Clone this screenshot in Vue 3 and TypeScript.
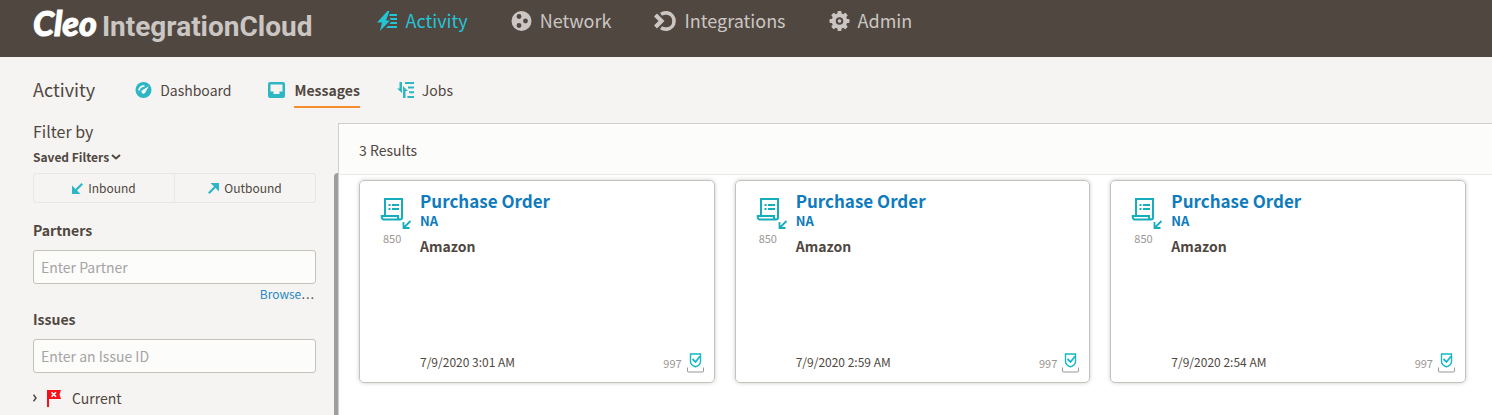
<script setup lang="ts">
import { ref } from 'vue'

interface Message {
  id: number
  type: string
  code: string
  reference: string
  partner: string
  received: string
  ack: string
}

const messages: Message[] = ['3:01', '2:59', '2:54'].map((time, index) => ({
  id: index,
  type: 'Purchase Order',
  code: '850',
  reference: 'NA',
  partner: 'Amazon',
  received: `7/9/2020 ${time} AM`,
  ack: '997',
}))

const partner = ref('')
const issueId = ref('')
</script>

<template>
  <div class="app">
    <header class="topbar">
      <a class="brand" href="#"><span class="brand-name">Cleo</span><span class="brand-product">IntegrationCloud</span></a>
      <nav class="main-nav" aria-label="Main">
        <a class="active" href="#activity">
          <svg width="21" height="20" viewBox="0 0 21 20" fill="currentColor" aria-hidden="true">
            <path d="M10.500 0 0 11.500h5L3 20l10-10.500H9L12.500 0z" />
            <path d="M12.800 3H20v2h-8zM12.500 7H20v2h-6zM14 11h6v2h-7.500zM11 15h9v2H9z" />
          </svg>
          <span>Activity</span>
        </a>
        <a href="#network">
          <svg width="21" height="20" viewBox="0 0 21 20" aria-hidden="true">
            <circle cx="10.500" cy="10" r="10" fill="currentColor" />
            <g fill="#504741"><circle cx="8" cy="5.500" r="2.400" /><circle cx="14.500" cy="10" r="2.400" /><circle cx="8" cy="14.500" r="2.400" /></g>
          </svg>
          <span>Network</span>
        </a>
        <a href="#integrations">
          <svg width="22" height="20" viewBox="0 0 22 20" fill="none" stroke="currentColor" aria-hidden="true">
            <path d="M1.500 4 7.500 10l-6 6" stroke-width="4.200" />
            <path d="M7 3.200C9 1.900 11 1.700 13 1.900c4.200.5 7 3.900 7 8.100s-2.800 7.600-7 8.100c-2 .2-4 0-6-1.300" stroke-width="3.600" />
          </svg>
          <span>Integrations</span>
        </a>
        <a href="#admin">
          <svg width="21" height="20" viewBox="0 0 21 20" aria-hidden="true">
            <g fill="currentColor">
              <circle cx="10.500" cy="10" r="7.800" />
              <rect v-for="turn in 8" :key="turn" x="8.500" y="0" width="4" height="5" rx="1" :transform="`rotate(${turn * 45} 10.500 10)`" />
            </g>
            <circle cx="10.500" cy="10" r="2.800" fill="none" stroke="#504741" stroke-width="2" />
          </svg>
          <span>Admin</span>
        </a>
      </nav>
    </header>

    <div class="subbar">
      <h1>Activity</h1>
      <nav class="sub-nav" aria-label="Activity">
        <a href="#dashboard">
          <svg width="17" height="16" viewBox="0 0 17 16" aria-hidden="true">
            <circle cx="8.500" cy="8" r="8" fill="#2db6c4" />
            <path d="M4 8.500a4.500 4.500 0 0 1 5.500-4.300" fill="none" stroke="#fff" stroke-width="1.600" />
            <path d="M13.800 4.200 8 7.800a2 2 0 1 0 2.300 2.500z" fill="#fff" />
          </svg>
          <span>Dashboard</span>
        </a>
        <a class="current" href="#messages">
          <svg width="18" height="16" viewBox="0 0 18 16" aria-hidden="true">
            <rect width="17" height="16" rx="2" fill="#2db6c4" />
            <path d="M2.500 2.500h12v7h-3V12h-6V9.500h-3z" fill="#f5f4f2" />
          </svg>
          <span>Messages</span>
        </a>
        <a href="#jobs">
          <svg width="17" height="16" viewBox="0 0 17 16" fill="#2db6c4" aria-hidden="true">
            <path d="M5 0v11L0 6.500h2.500V0zM6 16V4l5 5H8.500v7zM8 0h9v2H8zM11 4.500h6v2h-6zM12 9.300h5v2h-5zM10.500 14H17v2h-6.500z" />
          </svg>
          <span>Jobs</span>
        </a>
      </nav>
    </div>

    <div class="content">
      <aside class="sidebar">
        <h2>Filter by</h2>
        <button class="saved" type="button">
          <span>Saved Filters</span>
          <svg width="10" height="6" viewBox="0 0 10 6" aria-hidden="true"><path d="m1 1 4 3.500L9 1" fill="none" stroke="currentColor" stroke-width="2" /></svg>
        </button>
        <div class="directions">
          <button type="button">
            <svg width="11" height="11" viewBox="0 0 11 11" aria-hidden="true"><path d="m10.200.8-6.700 6.700" stroke="#2db6c4" stroke-width="2.200" /><path d="M0 2.500V11h8.500z" fill="#2db6c4" /></svg>
            <span>Inbound</span>
          </button>
          <button type="button">
            <svg width="11" height="11" viewBox="0 0 11 11" aria-hidden="true"><path d="M.8 10.200 7.500 3.500" stroke="#2db6c4" stroke-width="2.200" /><path d="M2.500 0H11v8.500z" fill="#2db6c4" /></svg>
            <span>Outbound</span>
          </button>
        </div>
        <label for="partner">Partners</label>
        <input id="partner" v-model="partner" type="text" placeholder="Enter Partner" />
        <a class="browse" href="#browse">Browse<span>…</span></a>
        <label for="issue">Issues</label>
        <input id="issue" v-model="issueId" type="text" placeholder="Enter an Issue ID" />
        <button class="tree-item" type="button">
          <svg width="4" height="8" viewBox="0 0 4 8" aria-hidden="true"><path d="M.5.700 3 4 .5 7.300" fill="none" stroke="currentColor" stroke-width="1.500" /></svg>
          <svg width="15" height="17" viewBox="0 0 15 17" aria-hidden="true">
            <path d="M0 0h14l-1.500 4.500L14 9H2v8H0z" fill="#f5101a" />
            <path d="m4.500 2.300 4.500 4.500m0-4.500L4.500 6.800" stroke="#fff" stroke-width="1.600" />
          </svg>
          <span>Current</span>
        </button>
      </aside>
      <div class="scroll-track"></div>

      <main class="results">
        <div class="results-head">{{ messages.length }} Results</div>
        <div class="cards">
          <article v-for="message in messages" :key="message.id" class="card">
            <div class="doc">
              <svg width="32" height="32" viewBox="0 0 32 32" fill="none" stroke="#16adbd" aria-hidden="true">
                <path d="M5 18V2h17v18.500a2 2 0 0 1-2 2H4.500a2.500 2.500 0 0 1-2.800-2.500V19H18v1.500a2 2 0 0 0 2 2" stroke-width="2" />
                <path d="M8.500 8h2m1.500 0h7M8.500 12h2m1.500 0h7" stroke-width="2" />
                <path d="m30.500 24-6.500 6.500M23.500 25v6h6" stroke-width="1.800" />
              </svg>
              <span class="code">{{ message.code }}</span>
            </div>
            <div class="details">
              <h3><a href="#message">{{ message.type }}</a></h3>
              <a class="reference" href="#message">{{ message.reference }}</a>
              <strong>{{ message.partner }}</strong>
              <footer>
                <time>{{ message.received }}</time>
                <span class="ack">
                  {{ message.ack }}
                  <svg width="18" height="20" viewBox="0 0 18 20" fill="none" aria-hidden="true">
                    <path d="M3.500 1h10v7.500c0 3-2.500 4.500-5 5.300-2.500-.8-5-2.300-5-5.300z" stroke="#18b8c6" stroke-width="1.400" />
                    <path d="m5.500 6 3 3L13 3.300" stroke="#18b8c6" stroke-width="1.800" />
                    <path d="M.5 14.500v3.500q0 1 1 1h14q1 0 1-1v-3.500" stroke="#9b9793" />
                  </svg>
                </span>
              </footer>
            </div>
          </article>
        </div>
      </main>
    </div>
  </div>
</template>

<style>
body {
  background: #f5f4f2;
}
</style>

<style scoped>
* {
  box-sizing: border-box;
}
.app {
  display: flex;
  flex-direction: column;
  min-height: 100vh;
  color: #504741;
  background: #f5f4f2;
  font: 14px/20px "Noto Sans CJK SC", "Noto Sans", sans-serif;
}
a {
  color: inherit;
  text-decoration: none;
}
button,
input {
  font: inherit;
  color: inherit;
}
h1,
h2,
h3 {
  margin: 0;
  font-weight: 400;
}
svg {
  flex: none;
}
.topbar {
  display: flex;
  align-items: flex-start;
  gap: 64px;
  height: 57px;
  padding: 0 33px;
  background: #504741;
  color: #cbc6c2;
}
.brand {
  display: flex;
  align-items: baseline;
  gap: 5px;
  padding-top: 3px;
  font: 700 28px/40px Roboto, sans-serif;
}
.brand-name {
  color: #fff;
  font-family: Lato, sans-serif;
  font-size: 34px;
  font-style: italic;
  font-weight: 900;
  -webkit-text-stroke: 1px currentColor;
}
.main-nav {
  display: flex;
  gap: 43px;
  padding-top: 8px;
  font-size: 18px;
  line-height: 24px;
}
.main-nav a {
  display: flex;
  align-items: center;
  gap: 8px;
}
.main-nav svg {
  margin-top: 2px;
}
.main-nav .active {
  color: #23c4d6;
}
.subbar {
  display: flex;
  align-items: center;
  gap: 40px;
  height: 66px;
  padding: 0 33px;
}
h1 {
  padding-bottom: 2px;
  font-size: 18px;
  line-height: 24px;
}
.sub-nav {
  display: flex;
  gap: 37px;
}
.sub-nav a {
  display: flex;
  align-items: center;
  gap: 8px;
}
.sub-nav span {
  padding: 6px 0;
  border-bottom: 2px solid transparent;
  border-top: 2px solid transparent;
}
.sub-nav .current span {
  font-weight: 700;
  border-bottom-color: #f68d2e;
}
.content {
  display: flex;
  flex: 1;
}
.sidebar {
  display: flex;
  flex-direction: column;
  align-items: stretch;
  width: 334px;
  padding: 0 18px 0 33px;
}
h2 {
  font-size: 16px;
  line-height: 16px;
}
.saved {
  display: flex;
  align-items: center;
  gap: 2px;
  margin: 10px 0 8px;
  padding: 0;
  border: 0;
  background: none;
  font-size: 12px;
  font-weight: 700;
  line-height: 16px;
}
.directions {
  display: flex;
  border: 1px solid #e8e6e0;
  border-radius: 3px;
  font-size: 12px;
}
.directions button {
  display: flex;
  flex: 1;
  align-items: center;
  justify-content: center;
  gap: 5px;
  height: 28px;
  padding: 0;
  border: 0;
  background: none;
}
.directions button + button {
  border-left: 1px solid #e8e6e0;
}
label {
  margin: 17px 0 10px;
  font-weight: 700;
}
input {
  width: 100%;
  height: 34px;
  padding: 0 7px;
  border: 1px solid #c3c2bb;
  border-radius: 3px;
  background: #fcfcfb;
}
input::placeholder {
  color: #a5a4a3;
  opacity: 1;
}
.browse {
  align-self: flex-end;
  margin-right: 2px;
  margin-bottom: -10px;
  padding-top: 2px;
  color: #2a86c5;
  font-size: 12px;
  line-height: 16px;
}
.browse span {
  color: #504741;
}
.tree-item {
  display: flex;
  align-items: center;
  gap: 10px;
  margin: 15px 0 0;
  padding: 0;
  border: 0;
  background: none;
}
.scroll-track {
  flex: none;
  width: 4px;
  margin-top: 50px;
  border-radius: 4px 0 0 0;
  background: #9e9e9e;
}
.results {
  flex: 1;
  border-top: 1px solid #cfcecb;
  border-left: 1px solid #cfcecb;
  background: #fff;
}
.results-head {
  padding: 16px 20px 14px;
  border-bottom: 1px solid #e9e9e9;
  background: #fcfcfa;
}
.cards {
  display: grid;
  grid-template-columns: repeat(3, 1fr);
  gap: 20px;
  padding: 5px 26px 32px 20px;
}
.card {
  display: flex;
  gap: 8px;
  min-height: 203px;
  padding: 9px 9px 9px 20px;
  border: 1px solid #c3c2bb;
  border-radius: 5px;
  box-shadow: 0 0 4px rgba(0, 0, 0, 0.2);
}
.doc {
  display: flex;
  flex-direction: column;
  width: 32px;
  padding-top: 7px;
}
.code {
  padding-left: 3px;
  font-size: 11px;
  line-height: 18px;
  color: #9b9793;
}
.details {
  display: flex;
  flex: 1;
  flex-direction: column;
  align-items: flex-start;
}
h3 {
  font-size: 17px;
  font-weight: 700;
  line-height: 22px;
  color: #0f7bbd;
}
h3 a {
  display: block;
}
.reference {
  font-size: 13px;
  font-weight: 700;
  line-height: 18px;
  color: #0f7bbd;
}
strong {
  margin-top: 6px;
}
footer {
  display: flex;
  align-items: flex-start;
  justify-content: space-between;
  width: 100%;
  margin-top: auto;
  font-size: 12px;
  line-height: 18px;
}
.ack {
  display: flex;
  align-items: center;
  gap: 5px;
  color: #9b9793;
  font-size: 11px;
}
</style>
